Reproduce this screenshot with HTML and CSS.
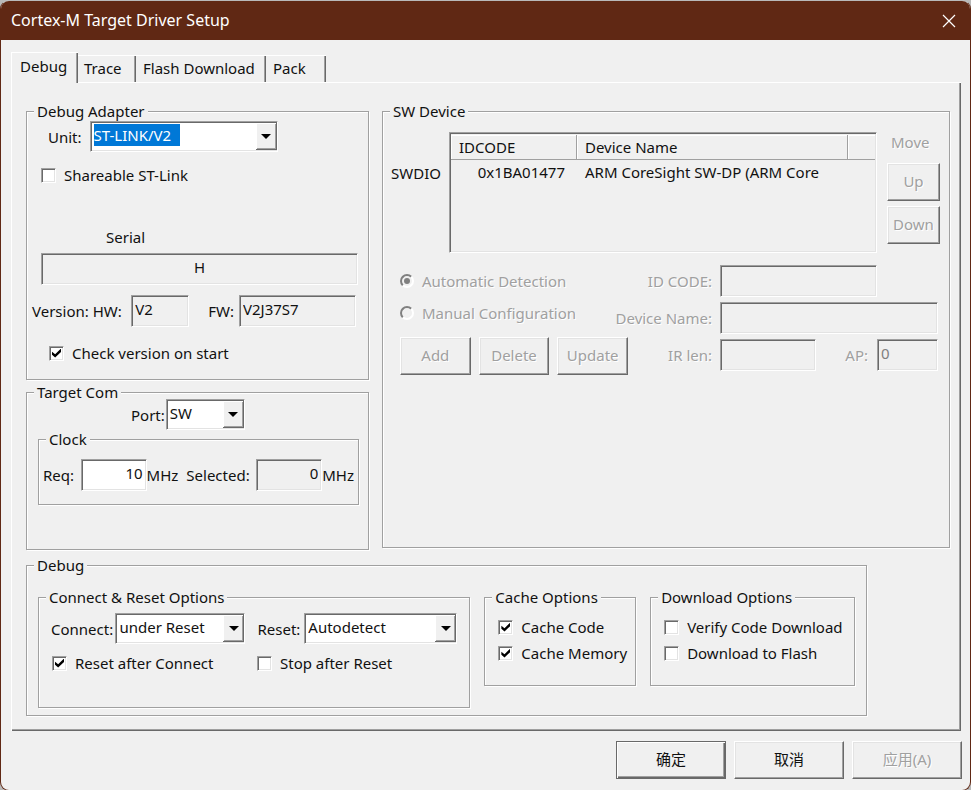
FILE: index.html
```html
<!DOCTYPE html>
<html lang="en">
<head>
<meta charset="utf-8">
<title>Cortex-M Target Driver Setup</title>
<link rel="stylesheet" href="styles.css">
</head>
<body>
<main class="dialog">
  <header class="titlebar">
    <h1>Cortex-M Target Driver Setup</h1>
    <button type="button" class="close" aria-label="Close">
      <svg width="14" height="14" viewBox="0 0 14 14"><path d="M1 1 13 13M13 1 1 13" stroke="#fff" stroke-width="1.2" fill="none"/></svg>
    </button>
  </header>

  <div class="tabs" role="tablist">
    <button type="button" role="tab" aria-selected="true" class="tab active">Debug</button>
    <button type="button" role="tab" class="tab trace">Trace</button>
    <button type="button" role="tab" class="tab flash">Flash Download</button>
    <button type="button" role="tab" class="tab pack">Pack</button>
  </div>

  <section class="panel">
    <div class="columns">
      <div class="left">
        <fieldset class="group adapter">
          <legend>Debug Adapter</legend>
          <div class="row unit-row">
            <label for="unit">Unit:</label>
            <span class="combo unit"><select id="unit"><option>ST-LINK/V2</option></select><span class="arrow"><svg width="10" height="5" viewBox="0 0 10 5"><path d="M0 0H10L5 5Z"/></svg></span></span>
          </div>
          <label class="check shareable"><input type="checkbox"><span>Shareable ST-Link</span></label>
          <label class="serial-label" for="serial">Serial</label>
          <input class="field serial" id="serial" type="text" value="H" readonly>
          <div class="row version-row">
            <label for="hw">Version: HW:</label>
            <input class="field hw" id="hw" type="text" value="V2" readonly>
            <label class="fw-label" for="fw">FW:</label>
            <input class="field fw" id="fw" type="text" value="V2J37S7" readonly>
          </div>
          <label class="check on-start"><input type="checkbox" checked><span>Check version on start</span></label>
        </fieldset>

        <fieldset class="group target">
          <legend>Target Com</legend>
          <div class="row port-row">
            <label for="port">Port:</label>
            <span class="combo port"><select id="port"><option>SW</option></select><span class="arrow"><svg width="10" height="5" viewBox="0 0 10 5"><path d="M0 0H10L5 5Z"/></svg></span></span>
          </div>
          <fieldset class="group clock">
            <legend>Clock</legend>
            <div class="row clock-row">
              <label for="req">Req:</label>
              <input class="field mhz white" id="req" type="text" value="10">
              <span class="unit-text">MHz</span>
              <label for="selected">Selected:</label>
              <input class="field mhz" id="selected" type="text" value="0" readonly>
              <span>MHz</span>
            </div>
          </fieldset>
        </fieldset>
      </div>

      <fieldset class="group device">
        <legend>SW Device</legend>
        <div class="device-top">
          <span class="swdio">SWDIO</span>
          <div class="list">
            <table>
              <colgroup><col class="c-id"><col class="c-name"><col></colgroup>
              <thead><tr><th>IDCODE</th><th>Device Name</th><th></th></tr></thead>
              <tbody><tr><td class="id">0x1BA01477</td><td>ARM CoreSight SW-DP (ARM Core</td><td></td></tr></tbody>
            </table>
          </div>
          <div class="move">
            <span class="dim">Move</span>
            <button type="button" class="btn" disabled>Up</button>
            <button type="button" class="btn" disabled>Down</button>
          </div>
        </div>
        <div class="device-bottom">
          <div class="modes">
            <label class="check dim"><input type="radio" name="mode" checked disabled><span>Automatic Detection</span></label>
            <label class="check dim"><input type="radio" name="mode" disabled><span>Manual Configuration</span></label>
            <div class="actions">
              <button type="button" class="btn" disabled>Add</button>
              <button type="button" class="btn" disabled>Delete</button>
              <button type="button" class="btn" disabled>Update</button>
            </div>
          </div>
          <div class="form">
            <label class="dim" for="idcode">ID CODE:</label>
            <input class="field idcode" id="idcode" type="text" disabled>
            <label class="dim" for="devname">Device Name:</label>
            <input class="field" id="devname" type="text" disabled>
            <label class="dim" for="irlen">IR len:</label>
            <div class="ir-row">
              <input class="field irlen" id="irlen" type="text" disabled>
              <label class="dim" for="ap">AP:</label>
              <input class="field ap" id="ap" type="text" value="0" disabled>
            </div>
          </div>
        </div>
      </fieldset>
    </div>

    <fieldset class="group debug">
      <legend>Debug</legend>
      <div class="debug-groups">
        <fieldset class="group connect">
          <legend>Connect &amp; Reset Options</legend>
          <div class="row connect-row">
            <label for="connect">Connect:</label>
            <span class="combo conn"><select id="connect"><option>under Reset</option></select><span class="arrow"><svg width="10" height="5" viewBox="0 0 10 5"><path d="M0 0H10L5 5Z"/></svg></span></span>
            <label class="reset-label" for="reset">Reset:</label>
            <span class="combo rst"><select id="reset"><option>Autodetect</option></select><span class="arrow"><svg width="10" height="5" viewBox="0 0 10 5"><path d="M0 0H10L5 5Z"/></svg></span></span>
          </div>
          <div class="after-row">
            <label class="check"><input type="checkbox" checked><span>Reset after Connect</span></label>
            <label class="check"><input type="checkbox"><span>Stop after Reset</span></label>
          </div>
        </fieldset>
        <fieldset class="group options cache">
          <legend>Cache Options</legend>
          <label class="check"><input type="checkbox" checked><span>Cache Code</span></label>
          <label class="check"><input type="checkbox" checked><span>Cache Memory</span></label>
        </fieldset>
        <fieldset class="group options download">
          <legend>Download Options</legend>
          <label class="check"><input type="checkbox"><span>Verify Code Download</span></label>
          <label class="check"><input type="checkbox"><span>Download to Flash</span></label>
        </fieldset>
      </div>
    </fieldset>
  </section>

  <footer class="buttons">
    <button type="button" class="btn default">确定</button>
    <button type="button" class="btn">取消</button>
    <button type="button" class="btn" disabled>应用(A)</button>
  </footer>
</main>
</body>
</html>
```
FILE: styles.css
```css
:root {
  --face: #f0f0f0;
  --light: #e3e3e3;
  --shadow: #a0a0a0;
  --dark: #696969;
}

* { box-sizing: border-box; }

body {
  margin: 0;
  background: #b9b9b9;
  color: #111;
  font: 15px/20px "Noto Sans", "Noto Sans CJK SC", sans-serif;
}

button, input, select { font: inherit; color: inherit; margin: 0; }

.dialog {
  display: flex;
  flex-direction: column;
  min-height: 100vh;
  background: var(--face);
  border: 1px solid #602814;
  border-top-color: #b9b9b9;
  border-radius: 9px;
  overflow: hidden;
}

.titlebar {
  display: flex;
  align-items: center;
  justify-content: space-between;
  height: 39px;
  padding: 0 14px 0 10px;
  background: #602814;
  color: #fff;
}
.titlebar h1 { margin: 0; padding-bottom: 2px; font-size: 16px; font-weight: 400; }
.close { display: flex; padding: 0; border: 0; background: none; }

/* Tabs */
.tabs { display: flex; align-items: flex-end; padding: 12px 10px 0; }
.tab {
  height: 27px;
  padding: 0 6px 2px;
  border: 0;
  border-top: 1px solid #fff;
  background: var(--face);
  text-align: left;
  box-shadow: inset -1px 0 var(--dark), inset -2px 0 var(--shadow);
}
.tab.active {
  position: relative;
  width: 67px;
  height: 31px;
  margin-bottom: -1px;
  padding: 0 8px 4px;
  border-left: 1px solid #fff;
}
.tab.trace { width: 58px; }
.tab.flash { width: 130px; padding-left: 7px; }
.tab.pack { width: 60px; padding-left: 7px; }

.panel {
  margin: 0 9px 0 10px;
  padding: 21px 11px 15px 14px;
  border-top: 1px solid #fff;
  border-left: 1px solid #fff;
  box-shadow: inset -1px -1px var(--dark), inset -2px -2px var(--shadow);
}

/* Etched group boxes */
.group {
  min-width: 0;
  margin: 0;
  padding: 0;
  border: 1px solid var(--shadow);
  box-shadow: 1px 1px #fff, inset 1px 1px #fff;
}
.group > legend {
  margin-left: 7px;
  padding: 0 3px;
  background: var(--face);
  line-height: 14px;
}

.columns {
  display: grid;
  grid-template-columns: minmax(0, 343fr) minmax(0, 568fr);
  gap: 13px;
}
.row { display: flex; align-items: center; white-space: nowrap; }

/* Sunken fields */
.field {
  min-width: 0;
  height: 32px;
  padding: 0 3px 5px;
  border: 1px solid;
  border-color: var(--shadow) #fff #fff var(--shadow);
  border-radius: 0;
  background: var(--face);
  box-shadow: inset 1px 1px var(--dark), inset -1px -1px var(--light);
  outline: 0;
}
.field.white { background: #fff; }
.field:disabled { color: #808080; }

.combo { position: relative; display: flex; height: 31px; }
.combo select {
  appearance: none;
  width: 100%;
  padding: 0 24px 3px 3px;
  border: 1px solid;
  border-color: var(--shadow) #fff #fff var(--shadow);
  border-radius: 0;
  background: #fff;
  box-shadow: inset 1px 1px var(--dark), inset -1px -1px var(--light);
  outline: 0;
}
.arrow {
  position: absolute;
  top: 2px;
  right: 1px;
  bottom: 2px;
  display: flex;
  align-items: center;
  justify-content: center;
  width: 21px;
  background: var(--face);
  box-shadow: inset -1px -1px var(--dark), inset 1px 1px #fff, inset -2px -2px var(--shadow);
  pointer-events: none;
}

/* Check boxes and radio buttons */
.check { display: flex; align-items: center; gap: 8px; white-space: nowrap; }
.check input {
  appearance: none;
  position: relative;
  flex: none;
  width: 15px;
  height: 15px;
  border: 1px solid;
  border-color: var(--shadow) #fff #fff var(--shadow);
  background: #fff;
  box-shadow: inset 1px 1px var(--dark), inset -1px -1px var(--light);
}
.check input[type="checkbox"]:checked::before {
  content: "";
  position: absolute;
  inset: 2px;
  background: #000;
  clip-path: polygon(0 35%, 35% 65%, 100% 0, 100% 38%, 35% 100%, 0 70%);
}
.check input[type="radio"] {
  width: 14px;
  height: 14px;
  border: 2px solid;
  border-color: #808080 #fff #fff #808080;
  border-radius: 50%;
  background: var(--face);
  box-shadow: none;
}
.check input[type="radio"]:checked::before {
  content: "";
  position: absolute;
  inset: 2px;
  border-radius: 50%;
  background: #808080;
}

.btn {
  height: 38px;
  padding: 0 0 2px;
  border: 1px solid;
  border-color: #fff var(--dark) var(--dark) #fff;
  border-radius: 0;
  background: var(--face);
  box-shadow: inset -1px -1px var(--shadow), inset 1px 1px var(--light);
}
.btn:disabled, .dim { color: var(--shadow); text-shadow: 1px 1px #fff; }

/* Debug adapter */
.adapter { padding-bottom: 16px; }
.unit-row { gap: 8px; margin-top: 3px; padding-left: 21px; }
.unit { width: 188px; }
.unit select {
  color: #fff;
  background: linear-gradient(#0078d7, #0078d7) 3px 2px / 86px 22px no-repeat #fff;
}
.shareable { margin: 13px 0 0 14px; }
.serial-label { display: block; margin: 42px 0 0 79px; }
.serial {
  display: block;
  width: calc(100% - 24px);
  margin: 6px 0 0 14px;
  text-align: center;
}
.version-row { margin-top: 10px; padding: 0 12px 0 5px; }
.hw { width: 58px; margin-left: auto; }
.fw-label { margin-left: 19px; }
.fw { width: 117px; margin-left: 5px; }
.on-start { margin: 16px 0 0 22px; }

/* Target com */
.target { margin-top: 5px; padding-bottom: 44px; }
.port-row { padding-left: 104px; }
.port { width: 79px; margin-left: 1px; }
.clock { margin: 2px 9px 0 11px; padding-bottom: 13px; }
.clock-row { margin-top: 13px; padding: 0 4px; }
.clock-row label { margin-right: auto; }
.mhz { width: 66px; text-align: right; }
.unit-text { margin-right: 8px; }

/* SW device */
.device { height: calc(100% - 2px); }
.device-top { display: flex; margin-top: 14px; padding: 0 9px 0 8px; }
.swdio { width: 58px; padding-top: 31px; }
.list {
  flex: 1;
  min-width: 0;
  height: 121px;
  border: 1px solid;
  border-color: var(--shadow) #fff #fff var(--shadow);
  box-shadow: inset 1px 1px var(--dark), inset -1px -1px var(--light);
  padding: 2px 1px 1px;
}
.list table { width: 100%; table-layout: fixed; border-collapse: separate; border-spacing: 0; }
.c-id { width: 126px; }
.c-name { width: 64%; }
.list th {
  height: 25px;
  padding: 0 8px;
  border-right: 1px solid var(--shadow);
  border-bottom: 1px solid var(--shadow);
  box-shadow: inset 1px 1px #fff;
  font-weight: 400;
  text-align: left;
}
.list th:last-child { border-right: 0; }
.list td { padding: 2px 0 0 8px; white-space: nowrap; }
.list .id { padding: 2px 12px 0 0; text-align: right; }
.move { display: flex; flex-direction: column; gap: 5px; width: 53px; margin-left: 10px; }
.move .dim { height: 26px; padding-left: 4px; }

.device-bottom { display: flex; margin-top: 12px; padding: 0 11px 0 17px; }
.modes { width: 228px; padding-top: 6px; }
.modes .check + .check { margin-top: 12px; }
.actions { display: flex; gap: 8px; margin-top: 14px; }
.actions .btn { flex: 1; }
.form {
  flex: 1;
  display: grid;
  grid-template-columns: 1fr 218px;
  align-content: start;
  align-items: center;
  gap: 5px 8px;
  text-align: right;
  white-space: nowrap;
  margin-left: -24px;
}
.idcode { width: 157px; }
.ir-row { display: flex; align-items: center; }
.irlen { width: 96px; margin-right: auto; }
.ap { width: 61px; margin-left: 9px; }

/* Debug options */
.debug { width: 91%; margin-top: 8px; padding-bottom: 7px; }
.debug-groups {
  display: grid;
  grid-template-columns: 433fr 152fr 205fr;
  align-items: start;
  gap: 14px;
  margin: 18px 11px 0;
}
.connect { padding-bottom: 34px; }
.connect-row { margin-top: 9px; padding: 0 12px; }
.conn { width: 130px; margin-left: auto; }
.reset-label { margin-left: 12px; }
.rst { width: 153px; margin-left: 4px; }
.after-row {
  display: grid;
  grid-template-columns: 205px 1fr;
  margin-top: 9px;
  padding-left: 13px;
}
.options { padding: 0 6px 22px 13px; }
.options > legend { margin-left: -6px; }
.options .check { margin-top: 6px; overflow: hidden; }
.options legend + .check { margin-top: 13px; }

/* Dialog buttons */
.buttons { display: flex; justify-content: flex-end; gap: 8px; margin-top: 10px; padding: 0 8px 11px; }
.buttons .btn { width: 110px; }
.buttons .default { border-color: var(--dark); box-shadow: inset 1px 1px #fff, inset -1px -1px var(--dark), inset -2px -2px var(--shadow); }
```
